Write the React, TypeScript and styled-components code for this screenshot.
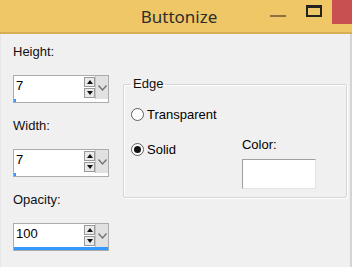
import React from 'react';
import styled, { createGlobalStyle } from 'styled-components';

const GlobalStyle = createGlobalStyle`
    html, body {
        margin: 0;
        padding: 0;
        background: #f0f0f0;
    }
`;

const Window = styled.div`
    width: 352px;
    height: 267px;
    box-sizing: border-box;
    display: flex;
    flex-direction: column;
    background: #f0f0f0;
    font-family: 'Liberation Sans', Arial, sans-serif;
    font-size: 13px;
    color: #000;
    overflow: hidden;
`;

const TitleBar = styled.div`
    position: relative;
    height: 32px;
    flex-shrink: 0;
    background: #f0c766;
    border-bottom: 2px solid #d9ad55;
    display: flex;
    align-items: center;
    justify-content: center;
`;

const Title = styled.span`
    font-family: 'Noto Sans', 'Open Sans', sans-serif;
    font-size: 17px;
    color: #2e2e2e;
    margin-left: 6px;
`;

const Controls = styled.div`
    position: absolute;
    top: 0;
    right: 0;
    display: flex;
    align-items: flex-start;
`;

const MinButton = styled.div`
    width: 16px;
    height: 2px;
    margin-top: 15px;
    margin-right: 20px;
    background: #8c7240;
`;

const MaxButton = styled.div`
    width: 12px;
    height: 7px;
    margin-top: 5px;
    margin-right: 10px;
    border: 2px solid #222;
    border-top-width: 3px;
`;

const CloseButton = styled.div`
    width: 20px;
    height: 24px;
    background: #c95050;
`;

const Body = styled.div`
    flex: 1;
    display: flex;
    border-right: 2px solid #d4d4d4;
    border-bottom: 2px solid #d4d4d4;
    border-left: 1px solid #e6e6e6;
    padding: 11px 0 0 12px;
`;

const LeftColumn = styled.div`
    display: flex;
    flex-direction: column;
    width: 96px;
`;

const FieldLabel = styled.div`
    height: 14px;
    line-height: 14px;
    margin-bottom: 16px;
    color: #111;
`;

const SpinBox = styled.div`
    width: 96px;
    height: 28px;
    box-sizing: border-box;
    border: 1px solid #acacac;
    background: #fff;
    display: flex;
    flex-direction: column;
    margin-bottom: 16px;
`;

const SpinRow = styled.div`
    flex: 1;
    display: flex;
`;

const SpinValue = styled.div`
    flex: 1;
    padding: 3px 0 0 2px;
    line-height: 14px;
`;

const Arrows = styled.div`
    width: 11px;
    display: flex;
    flex-direction: column;
    justify-content: space-between;
    padding: 1px 0 1px;
`;

const ArrowButton = styled.div<{ down?: boolean }>`
    width: 9px;
    height: 8px;
    border: 1px solid #9a9a9a;
    background: #eaeaea;
    display: flex;
    align-items: center;
    justify-content: center;

    &::after {
        content: '';
        border-left: 3px solid transparent;
        border-right: 3px solid transparent;
        ${props =>
            props.down ? 'border-top: 4px solid #111;' : 'border-bottom: 4px solid #111;'}
    }
`;

const Dropdown = styled.div`
    width: 12px;
    background: #e1e1e1;
    border-left: 1px solid #c4c4c4;
    display: flex;
    align-items: center;
    justify-content: center;
`;

const Progress = styled.div`
    height: 3px;
    background: #fff;
`;

const ProgressFill = styled.div`
    height: 100%;
    background: #3399ff;
`;

const EdgeGroup = styled.fieldset`
    margin: 32px 0 0 14px;
    padding: 0 0 0 7px;
    width: 224px;
    height: 121px;
    box-sizing: border-box;
    border: 1px solid #d5d5d5;
    box-shadow: inset 1px 1px 0 #fff, 1px 1px 0 #fff;
    border-radius: 2px;
    display: flex;
    flex-direction: column;
`;

const Legend = styled.legend`
    padding: 0 2px;
    margin-left: 0;
    line-height: 14px;
    color: #111;
`;

const RadioRow = styled.div`
    display: flex;
    align-items: center;
    gap: 3px;
    height: 16px;
    margin-top: 15px;
`;

const RadioCircle = styled.div<{ checked?: boolean }>`
    width: 13px;
    height: 13px;
    box-sizing: border-box;
    border-radius: 50%;
    border: 1px solid #5f5f5f;
    background: #fff;
    display: flex;
    align-items: center;
    justify-content: center;

    &::after {
        content: '';
        display: ${props => (props.checked ? 'block' : 'none')};
        width: 7px;
        height: 7px;
        border-radius: 50%;
        background: #111;
    }
`;

const SolidRow = styled.div`
    display: flex;
    margin-top: 19px;
`;

const ColorColumn = styled.div`
    display: flex;
    flex-direction: column;
    margin-left: 66px;
    margin-top: -3px;
`;

const ColorLabel = styled.div`
    line-height: 14px;
    margin-bottom: 7px;
`;

const ColorSwatch = styled.div`
    width: 74px;
    height: 30px;
    box-sizing: border-box;
    background: #fff;
    border-top: 1px solid #a0a0a0;
    border-left: 1px solid #a0a0a0;
    border-right: 1px solid #e3e3e3;
    border-bottom: 1px solid #e3e3e3;
`;

const Chevron = () => (
    <svg width="9" height="6" viewBox="0 0 9 6">
        <path d="M0.5 0.5 L4.5 5 L8.5 0.5" fill="none" stroke="#707070" strokeWidth="1.3" />
    </svg>
);

const Spinner = ({ value, percent }: { value: string; percent: number }) => (
    <SpinBox>
        <SpinRow>
            <SpinValue>{value}</SpinValue>
            <Arrows>
                <ArrowButton />
                <ArrowButton down />
            </Arrows>
            <Dropdown>
                <Chevron />
            </Dropdown>
        </SpinRow>
        <Progress>
            <ProgressFill style={{ width: `${percent}%` }} />
        </Progress>
    </SpinBox>
);

const fields = [
    { label: 'Height:', value: '7', percent: 2 },
    { label: 'Width:', value: '7', percent: 2 },
    { label: 'Opacity:', value: '100', percent: 100 },
];

const App = () => (
    <>
        <GlobalStyle />
        <Window>
            <TitleBar>
                <Title>Buttonize</Title>
                <Controls>
                    <MinButton />
                    <MaxButton />
                    <CloseButton />
                </Controls>
            </TitleBar>
            <Body>
                <LeftColumn>
                    {fields.map(f => (
                        <React.Fragment key={f.label}>
                            <FieldLabel>{f.label}</FieldLabel>
                            <Spinner value={f.value} percent={f.percent} />
                        </React.Fragment>
                    ))}
                </LeftColumn>
                <EdgeGroup>
                    <Legend>Edge</Legend>
                    <RadioRow>
                        <RadioCircle />
                        <span>Transparent</span>
                    </RadioRow>
                    <SolidRow>
                        <RadioRow style={{ marginTop: 0 }}>
                            <RadioCircle checked />
                            <span>Solid</span>
                        </RadioRow>
                        <ColorColumn>
                            <ColorLabel>Color:</ColorLabel>
                            <ColorSwatch />
                        </ColorColumn>
                    </SolidRow>
                </EdgeGroup>
            </Body>
        </Window>
    </>
);

export default App;
